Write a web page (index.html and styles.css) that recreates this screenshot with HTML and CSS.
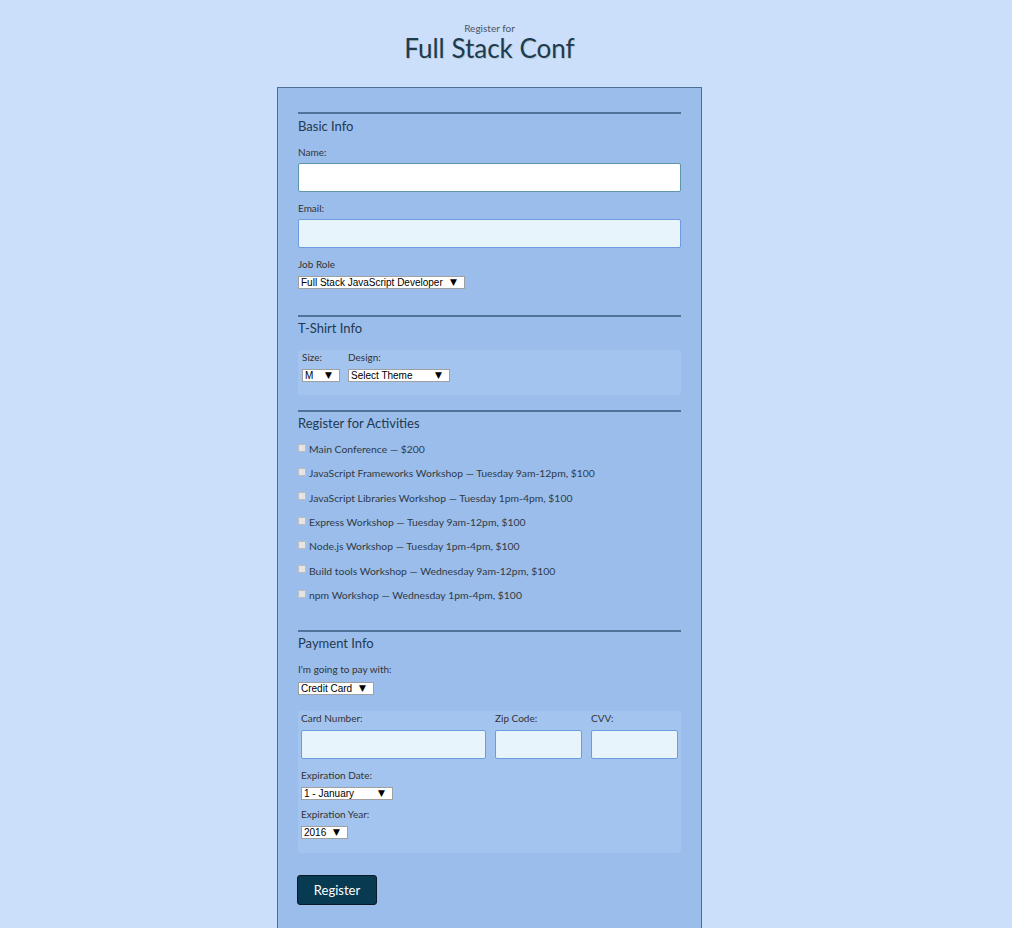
FILE: index.html
```html
<!DOCTYPE html>
<html lang="en">
<head>
<meta charset="utf-8">
<title>Full Stack Conf</title>
<link rel="stylesheet" href="styles.css">
</head>
<body>
<div class="page">
  <header class="head">
    <p class="pre">Register for</p>
    <h1 class="title">Full Stack Conf</h1>
  </header>
  <form class="card">
    <section class="sec basic">
      <h2 class="sec-title">Basic Info</h2>
      <label class="lbl lbl-first" for="name">Name:</label>
      <input class="txt txt-white" id="name" type="text">
      <label class="lbl" for="mail">Email:</label>
      <input class="txt" id="mail" type="email">
      <label class="lbl" for="role">Job Role</label>
      <span class="sel sel-role"><select id="role"><option>Full Stack JavaScript Developer</option></select></span>
    </section>

    <section class="sec shirt">
      <h2 class="sec-title">T-Shirt Info</h2>
      <div class="box shirt-box">
        <div class="col">
          <label class="lbl" for="size">Size:</label>
          <span class="sel sel-size"><select id="size"><option>M</option></select></span>
        </div>
        <div class="col">
          <label class="lbl" for="design">Design:</label>
          <span class="sel sel-design"><select id="design"><option>Select Theme</option></select></span>
        </div>
      </div>
    </section>

    <section class="sec acts">
      <h2 class="sec-title">Register for Activities</h2>
      <label class="act"><input type="checkbox" class="chk"><span>Main Conference — $200</span></label>
      <label class="act"><input type="checkbox" class="chk"><span>JavaScript Frameworks Workshop — Tuesday 9am-12pm, $100</span></label>
      <label class="act"><input type="checkbox" class="chk"><span>JavaScript Libraries Workshop — Tuesday 1pm-4pm, $100</span></label>
      <label class="act"><input type="checkbox" class="chk"><span>Express Workshop — Tuesday 9am-12pm, $100</span></label>
      <label class="act"><input type="checkbox" class="chk"><span>Node.js Workshop — Tuesday 1pm-4pm, $100</span></label>
      <label class="act"><input type="checkbox" class="chk"><span>Build tools Workshop — Wednesday 9am-12pm, $100</span></label>
      <label class="act"><input type="checkbox" class="chk"><span>npm Workshop — Wednesday 1pm-4pm, $100</span></label>
    </section>

    <section class="sec pay">
      <h2 class="sec-title">Payment Info</h2>
      <label class="lbl pay-lbl" for="payment">I'm going to pay with:</label>
      <span class="sel sel-pay"><select id="payment"><option>Credit Card</option></select></span>
      <div class="box card-box">
        <div class="card-row">
          <div class="col col-num">
            <label class="lbl" for="cc">Card Number:</label>
            <input class="txt" id="cc" type="text">
          </div>
          <div class="col col-zip">
            <label class="lbl" for="zip">Zip Code:</label>
            <input class="txt" id="zip" type="text">
          </div>
          <div class="col col-cvv">
            <label class="lbl" for="cvv">CVV:</label>
            <input class="txt" id="cvv" type="text">
          </div>
        </div>
        <label class="lbl exp-date" for="month">Expiration Date:</label>
        <span class="sel sel-month"><select id="month"><option>1 - January</option></select></span>
        <label class="lbl exp-year" for="year">Expiration Year:</label>
        <span class="sel sel-year"><select id="year"><option>2016</option></select></span>
      </div>
    </section>

    <button class="btn" type="button">Register</button>
  </form>
</div>
</body>
</html>
```

FILE: styles.css
```css
* { box-sizing: border-box; }

html, body {
  margin: 0;
  padding: 0;
  background: #cbdffa;
}

body {
  font-family: Lato, "Noto Sans", sans-serif;
  color: #333;
}

.page {
  width: 979px;
  display: flex;
  flex-direction: column;
  align-items: center;
}

.head {
  padding-top: 22px;
  text-align: center;
}

.pre {
  margin: 0;
  font-size: 10px;
  line-height: 12px;
  color: #4a5560;
}

.title {
  margin: 0;
  font-size: 26px;
  line-height: 28px;
  font-weight: 400;
  color: #1c3b52;
  text-shadow: 1px 1px 0 rgba(140, 140, 70, 0.3);
}

.card {
  margin-top: 25px;
  width: 425px;
  border: 1px solid #4b6f96;
  border-bottom: none;
  background: #9bbdec;
  padding: 24px 20px 40px;
  display: flex;
  flex-direction: column;
}

.sec {
  border-top: 2px solid #4f7398;
  display: flex;
  flex-direction: column;
  align-items: flex-start;
}

.sec-title {
  margin: 2px 0 0;
  font-size: 13px;
  line-height: 18px;
  font-weight: 400;
  color: #22394e;
}

.basic .sec-title { margin-top: 3px; }

.lbl {
  display: block;
  font-size: 10px;
  line-height: 14px;
  color: #333;
  margin: 0 0 5px;
}

.basic .lbl { margin-top: 9px; margin-bottom: 4px; }
.basic .lbl-first { margin-top: 10px; }

.txt {
  display: block;
  width: 100%;
  height: 29px;
  margin: 0;
  border: 1px solid #6c9be0;
  border-radius: 2px;
  background: #e8f4fb;
  font: inherit;
}

.txt-white {
  background: #ffffff;
  border-color: #5f95a8;
}

.sel {
  position: relative;
  display: block;
  height: 13px;
  background: #fff;
  border: 1px solid #a0a0a0;
}

.sel select {
  appearance: none;
  -webkit-appearance: none;
  border: none;
  background: transparent;
  margin: 0;
  padding: 0 0 0 2px;
  height: 11px;
  width: 100%;
  font-family: "Liberation Sans", Arial, sans-serif;
  font-size: 10px;
  line-height: 11px;
  color: #000;
  display: block;
}

.sel::after {
  content: "▼";
  position: absolute;
  top: -1px;
  right: 7px;
  font-family: "DejaVu Sans", sans-serif;
  font-size: 9px;
  line-height: 12px;
  color: #000;
  pointer-events: none;
}

.sel-role { width: 167px; margin-top: 1px; margin-bottom: 26px; }

.box {
  width: 100%;
  background: #a4c4f0;
  border-radius: 3px;
}

.shirt-box {
  margin-top: 13px;
  margin-bottom: 15px;
  padding: 0 4px 13px;
  display: flex;
  gap: 8px;
}

.sel-size { width: 38px; }
.sel-design { width: 102px; }

.acts .sec-title { margin-bottom: 5px; }
.acts { padding-bottom: 23px; }

.act {
  display: flex;
  align-items: center;
  height: 24.33px;
  font-size: 10.4px;
  color: #2f3a44;
}

.chk {
  appearance: none;
  -webkit-appearance: none;
  width: 8px;
  height: 8px;
  margin: -3px 3px 0 0;
  border: 1px solid #bdbdbd;
  background: #e4e4e4;
  border-radius: 1px;
  flex: none;
}

.pay .sec-title { margin-bottom: 10px; }
.pay-lbl { margin-bottom: 6px; }
.sel-pay { width: 76px; }

.card-box {
  margin-top: 16px;
  padding: 0 3px 14px;
}

.card-row {
  display: flex;
  gap: 9px;
}

.col-num { width: 185px; }
.col-zip { width: 87px; }
.col-cvv { width: 87px; }

.exp-date { margin-top: 9px; }
.exp-year { margin-top: 7px; }
.sel-month { width: 92px; }
.sel-year { width: 47px; }

.btn {
  align-self: flex-start;
  margin: 22px 0 0 -1px;
  width: 80px;
  height: 30px;
  background: #083a52;
  border: 1px solid #0a1a22;
  border-radius: 3px;
  color: #fff;
  font-family: inherit;
  font-size: 13px;
  padding: 0;
}
```
